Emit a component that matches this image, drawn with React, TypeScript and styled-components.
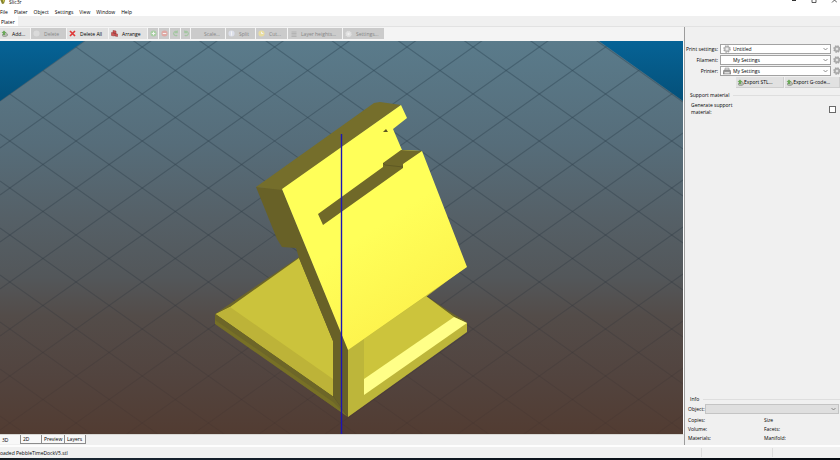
import React from "react";
import styled, { createGlobalStyle } from "styled-components";

const GlobalStyle = createGlobalStyle`
  * { box-sizing: border-box; }
  html, body { margin: 0; padding: 0; }
  body, button, select, input {
    font-family: "Open Sans", "Liberation Sans", sans-serif;
    font-size: 5px;
    line-height: 6px;
    color: #000;
  }
`;

const Window = styled.div`
  display: flex;
  flex-direction: column;
  height: 100vh;
  overflow: hidden;
  background: #f0f0f0;
`;

const TitleBar = styled.header`
  display: flex;
  align-items: flex-end;
  justify-content: space-between;
  height: 5px;
  flex: none;
  background: #fff;
`;

const Title = styled.div`
  display: flex;
  align-items: flex-end;
  gap: 3px;
`;

const WindowButtons = styled.div`
  display: flex;
  align-items: flex-end;
  gap: 14px;
  padding-right: 3px;
`;

const WindowButton = styled.button`
  display: flex;
  border: 0;
  padding: 0;
  background: none;
`;

const MenuBar = styled.nav`
  display: flex;
  align-items: flex-end;
  gap: 6px;
  height: 11px;
  flex: none;
  padding-bottom: 1px;
  background: #fff;
`;

const MenuItem = styled.button`
  border: 0;
  padding: 0;
  background: none;
`;

const TabStrip = styled.div`
  display: flex;
  height: 11px;
  flex: none;
  border-bottom: 1px solid #e2e2e2;
`;

const PageTab = styled.button`
  border: 0;
  padding: 2px 3px 0 1px;
  background: #fff;
`;

const Toolbar = styled.div`
  display: flex;
  align-items: stretch;
  gap: 1px;
  height: 14px;
  flex: none;
  margin-left: -1px;
  padding: 1px 0 2px;
  background: #f4f4f4;
`;

const ToolButton = styled.button<{ $w: number }>`
  display: flex;
  align-items: center;
  gap: 4px;
  width: ${(p) => p.$w}px;
  flex: none;
  border: 0;
  padding: 0 0 0 2px;
  background: #e1e1e1;
  white-space: nowrap;
  &:disabled {
    background: #cbcbcb;
    color: #858585;
  }
`;

const Main = styled.main`
  display: flex;
  flex: 1;
  min-height: 0;
`;

const Workspace = styled.section`
  display: flex;
  flex-direction: column;
  flex: 1;
  min-width: 0;
`;

const Viewport = styled.div`
  display: flex;
  flex: 1;
  min-height: 0;
  border-right: 1px solid #fbfbfb;
  border-bottom: 1px solid #d8d8d4;
  svg { width: 100%; height: 100%; }
`;

const ViewTabs = styled.div`
  display: flex;
  align-items: flex-start;
  height: 10px;
  flex: none;
`;

const ViewTab = styled.button<{ $w: number; $active?: boolean }>`
  width: ${(p) => p.$w}px;
  height: 9px;
  border: 1px solid #8c8c8c;
  border-width: ${(p) => (p.$active ? "0 1px 0 0" : "0 1px 1px 0")};
  padding: 0 0 0 2px;
  background: #f8f8f8;
  text-align: left;
`;

const SidePanel = styled.aside`
  display: flex;
  flex-direction: column;
  justify-content: space-between;
  width: 156px;
  flex: none;
  border-left: 1px solid #9c9c9c;
  padding-top: 17px;
  overflow: hidden;
`;

const PresetGrid = styled.div`
  display: grid;
  grid-template-columns: 33px 1fr 7px;
  grid-auto-rows: 10px;
  column-gap: 2px;
  row-gap: 1px;
  align-items: center;
`;

const PresetLabel = styled.label`
  text-align: right;
  white-space: nowrap;
`;

const SelectBox = styled.div<{ $off?: boolean }>`
  display: flex;
  align-items: center;
  gap: 2px;
  height: 10px;
  min-width: 0;
  flex: 1;
  padding: 0 2px;
  border: 1px solid ${(p) => (p.$off ? "#c4c4c4" : "#a2a2a2")};
  background: ${(p) => (p.$off ? "#dfdfdf" : "#fff")};
`;

const Select = styled.select`
  appearance: none;
  flex: 1;
  min-width: 0;
  height: 8px;
  border: 0;
  padding: 0;
  background: transparent;
`;

const IconSlot = styled.span`
  display: flex;
  justify-content: center;
  width: 8px;
`;

const ToolIcon = styled.span`
  display: flex;
  justify-content: center;
  width: 7px;
  flex: none;
`;

const GearButton = styled.button`
  display: flex;
  width: 8px;
  border: 0;
  padding: 0;
  background: none;
`;

const ExportRow = styled.div`
  display: flex;
  margin: 1px 0 0 51px;
  gap: 1px;
`;

const ExportButton = styled.button<{ $grow: number }>`
  display: flex;
  align-items: center;
  flex: ${(p) => p.$grow} 0 0;
  height: 11px;
  border: 0;
  border-right: 1px solid #cfcfcf;
  border-bottom: 1px solid #cfcfcf;
  padding: 0 0 0 1px;
  background: #e1e1e1;
  white-space: nowrap;
`;

const Group = styled.fieldset`
  border: 0;
  margin: 0;
  padding: 0;
  min-width: 0;
`;

const GroupTitle = styled.legend`
  display: flex;
  align-items: center;
  gap: 4px;
  width: 100%;
  padding: 0 0 0 5px;
  &::after {
    content: "";
    flex: 1;
    height: 1px;
    background: #dedede;
  }
`;

const SupportGroup = styled(Group)`
  margin-top: 4px;
`;

const OptionRow = styled.div`
  display: flex;
  align-items: center;
  justify-content: space-between;
  padding: 4px 4px 0 6px;
`;

const OptionLabel = styled.label`
  width: 48px;
  line-height: 7px;
`;

const CheckBox = styled.input`
  appearance: none;
  width: 7px;
  height: 7px;
  margin: 0;
  border: 1px solid #6a6a6a;
  background: #fff;
`;

const ObjectRow = styled.div`
  display: flex;
  align-items: center;
  padding: 2px 1px 3px 3px;
`;

const InfoGrid = styled.dl`
  display: grid;
  grid-template-columns: 76px 1fr;
  row-gap: 3px;
  margin: 0;
  padding: 0 0 4px 3px;
`;

const InfoTerm = styled.dt`
  margin: 0;
`;

const StatusBar = styled.footer`
  display: flex;
  height: 13px;
  flex: none;
  align-items: center;
  border-top: 2px solid #fdfdfd;
`;

const StatusText = styled.span`
  flex: 1;
`;

const StatusCell = styled.span<{ $w: number }>`
  width: ${(p) => p.$w}px;
  height: 9px;
  border-left: 1px solid #dcdcdc;
`;

const Taskbar = styled.div`
  height: 2px;
  flex: none;
  background: linear-gradient(90deg, #10151c, #1b2732 6%, #15202c 20%, #04090f);
`;

const Gear = ({ color = "#a4a4a4", fill = "#ddd" }: { color?: string; fill?: string }) => (
  <svg width="8" height="8" viewBox="0 0 16 16">
    <circle cx="8" cy="8" r="6" fill={fill} stroke={color} strokeWidth="3" strokeDasharray="3 1.7" />
    <circle cx="8" cy="8" r="4.5" fill={fill} stroke={color} strokeWidth="1.6" />
    <circle cx="8" cy="8" r="1.8" fill="#f4f4f4" />
  </svg>
);

const Printer = () => (
  <svg width="8" height="8" viewBox="0 0 16 16">
    <path d="M4 2h8v5H4z" fill="#ddd" stroke="#888" />
    <path d="M2 6h12l2 3v5H0V9z" fill="#999" stroke="#777" />
    <path d="M3 10h10v3H3z" fill="#dedede" />
  </svg>
);

const Brick = () => (
  <svg width="7" height="7" viewBox="0 0 14 14">
    <path d="M3 8l6-3 4 3v3l-5 3-5-2z" fill="#b4b8af" stroke="#7b8277" />
    <path d="M4 10V6H1l5-5 5 5H8v4z" fill="#6aa858" />
  </svg>
);

const Chevron = () => (
  <svg width="5" height="4" viewBox="0 0 10 8">
    <path d="M1 2l4 4 4-4" fill="none" stroke="#666" strokeWidth="1.4" />
  </svg>
);

const Cross = () => (
  <svg width="7" height="7" viewBox="0 0 14 14">
    <path d="M2 2l10 10M12 2L2 12" stroke="#df3a3a" strokeWidth="3.4" />
  </svg>
);

const Bricks = () => (
  <svg width="7" height="7" viewBox="0 0 14 14">
    <path d="M4 1l6 1v5l-6-1zM1 5l6 1v6l-6-1zM8 7l5 1v5l-5-1z" fill="#d45656" stroke="#8f3434" />
  </svg>
);

const Disc = ({ fill, mark }: { fill: string; mark?: string }) => (
  <svg width="7" height="7" viewBox="0 0 16 16">
    <circle cx="8" cy="8" r="7" fill={fill} />
    {mark && <path d={mark} fill="none" stroke="#f4f4f4" strokeWidth="2.2" />}
  </svg>
);

const Rotate = ({ flip }: { flip?: boolean }) => (
  <svg width="7" height="7" viewBox="0 0 16 16">
    <path
      d={flip ? "M4 12a5 5 0 1 0 0-8M4 1v5h5" : "M12 12a5 5 0 1 1 0-8M12 1v5H7"}
      fill="none"
      stroke="#a3c6a0"
      strokeWidth="2.4"
    />
  </svg>
);

const Layers = () => (
  <svg width="6" height="6" viewBox="0 0 12 12">
    <path d="M1 2h10M1 5h10M1 8h10M1 11h10" stroke="#adadad" strokeWidth="1.6" />
  </svg>
);

const tools: { w: number; label?: string; name?: string; icon?: React.ReactNode; off?: boolean }[] = [
  { w: 31, label: "Add...", icon: <Brick /> },
  { w: 35, label: "Delete", icon: <Disc fill="#dadada" />, off: true },
  { w: 41, label: "Delete All", icon: <Cross /> },
  { w: 38, label: "Arrange", icon: <Bricks /> },
  { w: 10, name: "Increase copies", icon: <Disc fill="#a9cfa4" mark="M8 4v8M4 8h8" />, off: true },
  { w: 10, name: "Decrease copies", icon: <Disc fill="#dfa9a4" mark="M4 8h8" />, off: true },
  { w: 10, name: "Rotate left", icon: <Rotate />, off: true },
  { w: 9, name: "Rotate right", icon: <Rotate flip />, off: true },
  { w: 34, label: "Scale...", off: true },
  { w: 29, label: "Split", icon: <Disc fill="#dcdfea" mark="M8 3v10" />, off: true },
  { w: 31, label: "Cut...", icon: <Disc fill="#e9dda0" mark="M8 4v4h4" />, off: true },
  { w: 54, label: "Layer heights...", icon: <Layers />, off: true },
  { w: 41, label: "Settings...", icon: <Gear color="#dedede" fill="#e6e6e6" />, off: true },
];

const presets = [
  { id: "print", label: "Print settings:", value: "Untitled", icon: <Gear /> },
  { id: "filament", label: "Filament:", value: "My Settings", icon: null },
  { id: "printer", label: "Printer:", value: "My Settings", icon: <Printer /> },
];

const STEP = 47;
const RISE = 485;
const falling = Array.from({ length: 20 }, (_, k) => -477 + k * STEP);
const rising = Array.from({ length: 19 }, (_, k) => 54 + k * STEP);

const Scene = () => (
  <svg viewBox="0 41 683 393" preserveAspectRatio="xMidYMid slice" role="img" aria-label="3D view">
    <defs>
      <linearGradient id="bed" x1="0" y1="0" x2="0" y2="1">
        <stop offset="0" stopColor="#5a7b8b" />
        <stop offset="0.26" stopColor="#566d7a" />
        <stop offset="0.45" stopColor="#556067" />
        <stop offset="0.6" stopColor="#53575a" />
        <stop offset="0.7" stopColor="#534c49" />
        <stop offset="0.85" stopColor="#52443f" />
        <stop offset="1" stopColor="#523c32" />
      </linearGradient>
      <linearGradient id="sky" x1="0" y1="0" x2="0" y2="1">
        <stop offset="0" stopColor="#066396" />
        <stop offset="1" stopColor="#045079" />
      </linearGradient>
      <linearGradient id="face" x1="0" y1="0" x2="0.5" y2="1">
        <stop offset="0.6" stopColor="#ffff59" />
        <stop offset="1" stopColor="#fdf24c" />
      </linearGradient>
      <linearGradient id="gridFade" x1="0" y1="41" x2="0" y2="434" gradientUnits="userSpaceOnUse">
        <stop offset="0" stopColor="#314c5c" stopOpacity="0.5" />
        <stop offset="0.6" stopColor="#303840" stopOpacity="0.38" />
        <stop offset="1" stopColor="#402f2b" stopOpacity="0.2" />
      </linearGradient>
    </defs>
    <rect y="41" width="683" height="393" fill="url(#bed)" />
    <g stroke="url(#gridFade)" strokeWidth="1.2">
      {falling.map((y) => (
        <line key={`f${y}`} x1="0" y1={y} x2="683" y2={y + RISE} />
      ))}
      {rising.map((y) => (
        <line key={`r${y}`} x1="0" y1={y} x2="683" y2={y - RISE} />
      ))}
    </g>
    <path d="M0 41H84L0 101z" fill="url(#sky)" />
    <path d="M599 41H683V101z" fill="url(#sky)" />

    <path d="M215 314L299 257L333 341V396L348 417L215 323z" fill="#6d6628" />
    <path d="M215 320L333 402L348 417L215 324z" fill="#777026" />
    <path d="M216 314L230 307L299 258L333 341V396z" fill="#cbc33c" />
    <path d="M216 314L230 307L333 379V396z" fill="#bdb338" />

    <path d="M426 296L455 315L467 322L454 320L424 300z" fill="#6d6728" />
    <path d="M348 348L467 266L426 297L454 317L467 323V332L348 417z" fill="#bdb63a" />
    <path d="M364 339L426 296L454 317L364 380z" fill="#ccc43c" />
    <path d="M364 379L454 317L467 323L364 395z" fill="#ffff88" />

    <path d="M256 187L282 189L348 350V417L333 396V341L299 258L296 248L282 247L277 239z" fill="#686127" />
    <path d="M256 187L374 103L380 102L401 105L282 190z" fill="#756e2b" />
    <path d="M282 189L401 105L407 118L393 129L402 150L422 151L467 267L348 350z" fill="url(#face)" />
    <path d="M318 214L383 167V163L401 150L422 151L403 164V168L323 225z" fill="#706929" />
    <path d="M383 163L385 165L403 167" fill="none" stroke="#5f5924" />
    <path d="M383 132L386 129L388 132z" fill="#5d5722" />
    <path d="M341.5 134V434" stroke="#1c14b4" strokeWidth="1.4" />
  </svg>
);

export default function App() {
  return (
    <>
      <GlobalStyle />
      <Window>
        <TitleBar>
          <Title>
            <svg width="6" height="6" viewBox="0 0 12 12">
              <path d="M0 0h11L8 9l-4 1z" fill="#85822d" />
              <path d="M5 0h5L7 7z" fill="#d3cd4a" />
            </svg>
            <span>Slic3r</span>
          </Title>
          <WindowButtons>
            <WindowButton aria-label="Minimize">
              <svg width="6" height="6" viewBox="0 0 6 6"><path d="M1 1.5h4" stroke="#333" /></svg>
            </WindowButton>
            <WindowButton aria-label="Maximize">
              <svg width="6" height="6" viewBox="0 0 6 6"><path d="M1 0v3.5h4V0" fill="none" stroke="#333" strokeWidth=".8" /></svg>
            </WindowButton>
            <WindowButton aria-label="Close">
              <svg width="6" height="6" viewBox="0 0 6 6"><path d="M1 3.5L3.5 1 6 3.5" fill="none" stroke="#333" strokeWidth=".8" /></svg>
            </WindowButton>
          </WindowButtons>
        </TitleBar>
        <MenuBar>
          {["File", "Plater", "Object", "Settings", "View", "Window", "Help"].map((m) => (
            <MenuItem key={m}>{m}</MenuItem>
          ))}
        </MenuBar>
        <TabStrip>
          <PageTab>Plater</PageTab>
        </TabStrip>
        <Main>
          <Workspace>
            <Toolbar>
              {tools.map((t) => (
                <ToolButton key={t.label ?? t.name} $w={t.w} disabled={t.off} aria-label={t.label ?? t.name}>
                  <ToolIcon>{t.icon}</ToolIcon>
                  {t.label}
                </ToolButton>
              ))}
            </Toolbar>
            <Viewport>
              <Scene />
            </Viewport>
            <ViewTabs>
              <ViewTab $w={21} $active>3D</ViewTab>
              <ViewTab $w={21}>2D</ViewTab>
              <ViewTab $w={23}>Preview</ViewTab>
              <ViewTab $w={21}>Layers</ViewTab>
            </ViewTabs>
          </Workspace>
          <SidePanel>
            <div>
              <PresetGrid>
                {presets.map((p) => (
                  <React.Fragment key={p.id}>
                    <PresetLabel htmlFor={p.id}>{p.label}</PresetLabel>
                    <SelectBox>
                      <IconSlot>{p.icon}</IconSlot>
                      <Select id={p.id} defaultValue={p.value}>
                        <option>{p.value}</option>
                      </Select>
                      <Chevron />
                    </SelectBox>
                    <GearButton aria-label={`Edit ${p.id} preset`}>
                      <Gear fill="#bdbdbd" />
                    </GearButton>
                  </React.Fragment>
                ))}
              </PresetGrid>
              <ExportRow>
                <ExportButton $grow={48}><Brick />Export STL...</ExportButton>
                <ExportButton $grow={55}><Brick />Export G-code...</ExportButton>
              </ExportRow>
              <SupportGroup>
                <GroupTitle>Support material</GroupTitle>
                <OptionRow>
                  <OptionLabel htmlFor="support">Generate support material:</OptionLabel>
                  <CheckBox type="checkbox" id="support" />
                </OptionRow>
              </SupportGroup>
            </div>
            <Group>
              <GroupTitle>Info</GroupTitle>
              <ObjectRow>
                <label htmlFor="object">Object:</label>
                <SelectBox $off>
                  <Select id="object" disabled />
                  <Chevron />
                </SelectBox>
              </ObjectRow>
              <InfoGrid>
                {["Copies:", "Size", "Volume:", "Facets:", "Materials:", "Manifold:"].map((t) => (
                  <InfoTerm key={t}>{t}</InfoTerm>
                ))}
              </InfoGrid>
            </Group>
          </SidePanel>
        </Main>
        <StatusBar>
          <StatusText>oaded PebbleTimeDockV5.stl</StatusText>
          <StatusCell $w={71} />
          <StatusCell $w={68} />
        </StatusBar>
        <Taskbar />
      </Window>
    </>
  );
}
